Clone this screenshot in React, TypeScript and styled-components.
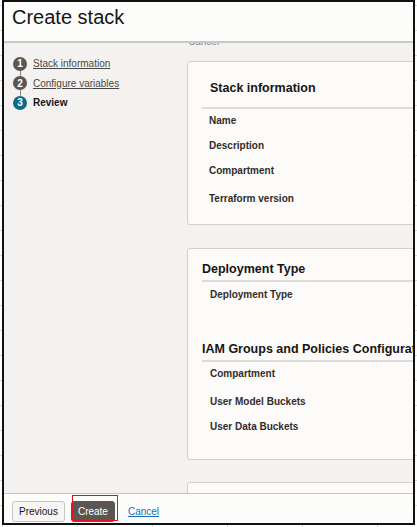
import React from "react";
import styled, { createGlobalStyle } from "styled-components";

const GlobalStyle = createGlobalStyle`
	html, body {
		margin: 0;
		padding: 0;
	}
	body {
		background-color: #ffffff;
		background-image:
			repeating-linear-gradient(to bottom, transparent 0 5px, #d6d6d6 5px 6px, transparent 6px 25px),
			repeating-linear-gradient(to right, transparent 0 2px, #d6d6d6 2px 3px, transparent 3px 75px);
		font-family: "Liberation Sans", Arial, sans-serif;
	}
`;

const Frame = styled.div`
	box-sizing: border-box;
	margin-left: 2px;
	width: 413px;
	height: 525px;
	border: 2px solid #111111;
	display: flex;
	flex-direction: column;
	background-color: #f3f2f0;
	overflow: hidden;
`;

const Header = styled.header`
	box-sizing: border-box;
	flex-shrink: 0;
	height: 41px;
	padding: 4px 0 0 8px;
	background-color: #fcfcfb;
	border-bottom: 2px solid #cbc9c5;
`;

const Title = styled.h1`
	margin: 0;
	font-size: 20px;
	font-weight: 400;
	line-height: 23px;
	color: #161513;
`;

const Body = styled.div`
	flex: 1;
	min-height: 0;
	display: flex;
`;

const Sidebar = styled.nav`
	box-sizing: border-box;
	flex-shrink: 0;
	width: 183px;
	padding: 11px 0 0 9px;
`;

const Step = styled.div`
	display: flex;
	align-items: center;
	gap: 6px;
	height: 19.5px;
`;

const StepBadge = styled.span<{ $active?: boolean; $line?: boolean }>`
	position: relative;
	flex-shrink: 0;
	width: 14px;
	height: 14px;
	border-radius: 50%;
	background-color: ${({ $active }) => ($active ? "#0f6a87" : "#5b5652")};
	color: #ffffff;
	font-size: 10px;
	font-weight: 700;
	display: flex;
	align-items: center;
	justify-content: center;

	&::after {
		content: "";
		display: ${({ $line }) => ($line ? "block" : "none")};
		position: absolute;
		left: 6.5px;
		top: 14px;
		width: 1px;
		height: 6px;
		background-color: #8d8884;
	}
`;

const StepLink = styled.a`
	font-size: 10px;
	color: #4a4744;
	text-decoration: underline;
	cursor: pointer;
`;

const StepCurrent = styled.span`
	font-size: 10px;
	font-weight: 700;
	color: #161513;
`;

const Main = styled.main`
	flex: 1;
	min-width: 0;
	overflow: hidden;
	display: flex;
	flex-direction: column;
`;

// bottom of a line that has scrolled up under the header
const Peek = styled.div`
	flex-shrink: 0;
	height: 3px;
	overflow: hidden;
	display: flex;
	flex-direction: column;
	justify-content: flex-end;
	padding-left: 1px;
	font-size: 10px;
	line-height: 8px;
	color: #8b8682;
`;

const Card = styled.section<{ $top: number; $bottom?: number }>`
	box-sizing: border-box;
	flex-shrink: 0;
	width: 330px;
	margin-top: ${({ $top }) => $top}px;
	padding-bottom: ${({ $bottom = 0 }) => $bottom}px;
	border: 1px solid #d3d0cc;
	border-radius: 3px;
	background-color: #fcfbfa;
`;

const CardHeading = styled.h2<{ $indent: number; $top: number }>`
	margin: ${({ $top }) => $top}px 0 0 0;
	padding-left: ${({ $indent }) => $indent}px;
	font-size: 12.5px;
	font-weight: 700;
	line-height: 16px;
	color: #161513;
	white-space: nowrap;
`;

const Divider = styled.div<{ $top: number }>`
	height: 2px;
	margin: ${({ $top }) => $top}px 0 0 14px;
	background-color: #dedbd7;
`;

const FieldLabel = styled.div<{ $indent: number; $top: number }>`
	margin-top: ${({ $top }) => $top}px;
	padding-left: ${({ $indent }) => $indent}px;
	font-size: 10px;
	font-weight: 700;
	line-height: 14px;
	color: #312d2a;
`;

const Footer = styled.footer`
	box-sizing: border-box;
	flex-shrink: 0;
	height: 30px;
	padding: 7px 0 0 8px;
	display: flex;
	align-items: flex-start;
	gap: 6px;
	background-color: #fcfcfb;
	border-top: 1px solid #c8c5c1;
`;

const Button = styled.button<{ $primary?: boolean }>`
	height: 21px;
	padding: 0 6px;
	border-radius: 3px;
	border: 1px solid ${({ $primary }) => ($primary ? "#5b5652" : "#c9c6c2")};
	background-color: ${({ $primary }) => ($primary ? "#5b5652" : "#f7f6f4")};
	color: ${({ $primary }) => ($primary ? "#ffffff" : "#161513")};
	font-family: "Liberation Sans", Arial, sans-serif;
	font-size: 10px;
	line-height: 19px;
	cursor: pointer;
`;

const HighlightWrap = styled.span`
	position: relative;
	display: inline-flex;
`;

const Highlight = styled.span`
	position: absolute;
	left: 1px;
	top: -6px;
	width: 46px;
	height: 26px;
	box-sizing: border-box;
	border: 1px solid #e0141e;
	pointer-events: none;
`;

const CancelLink = styled.a`
	margin-left: 7px;
	font-size: 10px;
	line-height: 21px;
	color: #1b6fae;
	text-decoration: underline;
	cursor: pointer;
`;

const steps = [
	{ n: 1, label: "Stack information", done: true },
	{ n: 2, label: "Configure variables", done: true },
	{ n: 3, label: "Review", done: false },
];

export default function App() {
	return (
		<>
			<GlobalStyle />
			<Frame>
				<Header>
					<Title>Create stack</Title>
				</Header>
				<Body>
					<Sidebar>
						{steps.map((step, index) => (
							<Step key={step.n}>
								<StepBadge $active={!step.done} $line={index < steps.length - 1}>
									{step.n}
								</StepBadge>
								{step.done ? (
									<StepLink>{step.label}</StepLink>
								) : (
									<StepCurrent>{step.label}</StepCurrent>
								)}
							</Step>
						))}
					</Sidebar>
					<Main>
						<Peek>
							<span>Cancel</span>
						</Peek>
						<Card $top={15} $bottom={18}>
							<CardHeading $indent={22} $top={18}>Stack information</CardHeading>
							<Divider $top={11} />
							<FieldLabel $indent={21} $top={5}>Name</FieldLabel>
							<FieldLabel $indent={21} $top={11}>Description</FieldLabel>
							<FieldLabel $indent={21} $top={11}>Compartment</FieldLabel>
							<FieldLabel $indent={21} $top={14}>Terraform version</FieldLabel>
						</Card>
						<Card $top={23} $bottom={25}>
							<CardHeading $indent={14} $top={12}>Deployment Type</CardHeading>
							<Divider $top={3} />
							<FieldLabel $indent={22} $top={6}>Deployment Type</FieldLabel>
							<CardHeading $indent={14} $top={39}>IAM Groups and Policies Configuration</CardHeading>
							<Divider $top={3} />
							<FieldLabel $indent={22} $top={5}>Compartment</FieldLabel>
							<FieldLabel $indent={22} $top={14}>User Model Buckets</FieldLabel>
							<FieldLabel $indent={22} $top={11}>User Data Buckets</FieldLabel>
						</Card>
						<Card $top={22}>
							<CardHeading $indent={14} $top={12}>&nbsp;</CardHeading>
						</Card>
					</Main>
				</Body>
				<Footer>
					<Button>Previous</Button>
					<HighlightWrap>
						<Button $primary>Create</Button>
						<Highlight />
					</HighlightWrap>
					<CancelLink>Cancel</CancelLink>
				</Footer>
			</Frame>
		</>
	);
}
